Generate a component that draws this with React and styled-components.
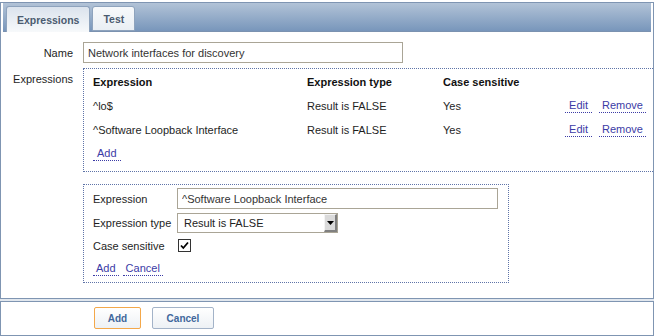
import React from 'react';
import styled, { createGlobalStyle } from 'styled-components';

const Global = createGlobalStyle`
  html, body { margin: 0; padding: 0; background: #fff; }
  body {
    font-family: "Liberation Sans", Arial, Helvetica, sans-serif;
    font-size: 11px;
    color: #1e1e1e;
  }
  * { box-sizing: border-box; }
`;

const Page = styled.div`
  width: 654px;
  height: 336px;
  padding-top: 2px;
  background: #fff;
  overflow: hidden;
`;

const Panel = styled.div`
  border: 1px solid #7f95b2;
  background: #fff;
`;

const TabBar = styled.div`
  margin: 0 2px;
  height: 29px;
  padding: 0 3px;
  display: flex;
  align-items: flex-end;
  gap: 2px;
  background: linear-gradient(#b2c3d7, #7896bb);
  border-bottom: 1px solid #7b92b0;
`;

const Tab = styled.div`
  height: ${(p) => (p.$active ? 26 : 25)}px;
  margin-bottom: ${(p) => (p.$active ? -1 : 0)}px;
  padding: 0 10px;
  display: flex;
  align-items: center;
  border: 1px solid #8ea3bd;
  border-bottom: ${(p) => (p.$active ? 'none' : '1px solid #8ea3bd')};
  border-radius: 3px 3px 0 0;
  background: ${(p) =>
    p.$active
      ? 'linear-gradient(#dbe3ed, #f7f9fb)'
      : 'linear-gradient(#f7f9fb, #eaeff4)'};
  color: #4b5b70;
  font-weight: bold;
  font-size: 10.5px;
`;

const Body = styled.div`
  padding: 10px 0 15px 0;
  display: grid;
  grid-template-columns: 82px 1fr;
  row-gap: 5px;
`;

const Label = styled.div`
  text-align: right;
  padding-right: 10px;
  line-height: 14px;
  color: #1e1e1e;
  align-self: ${(p) => (p.$top ? 'start' : 'center')};
  padding-top: ${(p) => (p.$top ? 4 : 0)}px;
`;

const TextInput = styled.input`
  width: ${(p) => p.$w}px;
  height: ${(p) => p.$h || 21}px;
  border: 1px solid #aaa596;
  padding: 0 4px;
  font-family: inherit;
  font-size: 11px;
  color: #333;
  background: #fff;
  outline: none;
`;

const RightCol = styled.div`
  display: flex;
  flex-direction: column;
  gap: 12px;
`;

const ExprBox = styled.div`
  border: 1px dotted #5f74a8;
  border-right: none;
  padding: 1px 7px 5px 9px;
  display: grid;
  grid-template-columns: 214px 136px 1fr auto;
  grid-auto-rows: 24px;
`;

const Cell = styled.div`
  display: flex;
  align-items: center;
  font-weight: ${(p) => (p.$head ? 'bold' : 'normal')};
  color: ${(p) => (p.$head ? '#111' : '#1e1e1e')};
  justify-content: ${(p) => (p.$end ? 'flex-end' : 'flex-start')};
  gap: 7px;
`;

const Link = styled.a`
  display: inline-block;
  color: #3b3ba6;
  text-decoration: none;
  line-height: 13px;
  padding: 0 ${(p) => (p.$pad != null ? p.$pad : 3)}px;
  border-bottom: 1px dotted #3b3ba6;
  cursor: pointer;
`;

const EditBox = styled.div`
  width: 426px;
  border: 1px dotted #5f74a8;
  padding: 3px 9px;
  display: grid;
  grid-template-columns: 84px auto;
  grid-template-rows: 21px 20px 17px 21px;
  row-gap: 4px;
  align-items: center;
`;

const FormLabel = styled.div`
  color: #1e1e1e;
  line-height: 14px;
`;

const SelectBox = styled.div`
  width: 161px;
  height: 20px;
  border: 1px solid #aaa596;
  background: #fff;
  display: flex;
  align-items: center;
  color: #222;
`;

const SelectText = styled.span`
  padding-left: 6px;
  flex: 1;
`;

const ArrowBtn = styled.span`
  width: 13px;
  height: 18px;
  background: #dadada;
  border-top: 1px solid #f4f4f4;
  border-left: 1px solid #f4f4f4;
  border-right: 2px solid #808080;
  border-bottom: 2px solid #808080;
  display: flex;
  align-items: center;
  justify-content: center;
`;

const Check = styled.span`
  width: 13px;
  height: 13px;
  margin-left: 1px;
  border: 1px solid #333;
  background: #fff;
  display: flex;
  align-items: center;
  justify-content: center;
`;

const LinkRow = styled.div`
  grid-column: 1 / -1;
  display: flex;
  align-items: center;
  gap: 4px;
`;

const Gap = styled.div`
  height: 2px;
  background: #e1e7ee;
`;

const Footer = styled.div`
  height: 35px;
  border: 1px solid #7f95b2;
  background: #fff;
  padding: 5px 0 0 93px;
  display: flex;
  align-items: flex-start;
  gap: 11px;
`;

const Button = styled.button`
  width: ${(p) => p.$w}px;
  height: 22px;
  border: 1px solid ${(p) => (p.$primary ? '#f4a84a' : '#a3b3c8')};
  border-radius: 2px;
  background: linear-gradient(#ffffff, #edf1f5);
  color: #41679c;
  font-family: inherit;
  font-weight: bold;
  font-size: 10px;
  padding: 0;
  cursor: pointer;
`;

const rows = [
  { expr: '^lo$', type: 'Result is FALSE', cs: 'Yes' },
  { expr: '^Software Loopback Interface', type: 'Result is FALSE', cs: 'Yes' },
];

export default function App() {
  return (
    <Page>
      <Global />
      <Panel>
        <TabBar>
          <Tab $active>Expressions</Tab>
          <Tab>Test</Tab>
        </TabBar>
        <Body>
          <Label>Name</Label>
          <div>
            <TextInput $w={320} readOnly value="Network interfaces for discovery" />
          </div>
          <Label $top>Expressions</Label>
          <RightCol>
            <ExprBox>
              <Cell $head>Expression</Cell>
              <Cell $head>Expression type</Cell>
              <Cell $head>Case sensitive</Cell>
              <Cell />
              {rows.map((r, i) => (
                <React.Fragment key={i}>
                  <Cell>{r.expr}</Cell>
                  <Cell>{r.type}</Cell>
                  <Cell>{r.cs}</Cell>
                  <Cell $end>
                    <Link $pad={4}>Edit</Link>
                    <Link $pad={3}>Remove</Link>
                  </Cell>
                </React.Fragment>
              ))}
              <Cell>
                <Link $pad={4}>Add</Link>
              </Cell>
            </ExprBox>
            <EditBox>
              <FormLabel>Expression</FormLabel>
              <TextInput $w={321} readOnly value="^Software Loopback Interface" />
              <FormLabel>Expression type</FormLabel>
              <SelectBox>
                <SelectText>Result is FALSE</SelectText>
                <ArrowBtn>
                  <svg width="7" height="4" viewBox="0 0 7 4">
                    <path d="M0 0 H7 L3.5 4 Z" fill="#000" />
                  </svg>
                </ArrowBtn>
              </SelectBox>
              <FormLabel>Case sensitive</FormLabel>
              <div>
                <Check>
                  <svg width="11" height="11" viewBox="0 0 11 11">
                    <path d="M2 5.5 L4.3 8 L9 2.5" stroke="#000" strokeWidth="1.8" fill="none" />
                  </svg>
                </Check>
              </div>
              <LinkRow>
                <Link $pad={3}>Add</Link>
                <Link $pad={3}>Cancel</Link>
              </LinkRow>
            </EditBox>
          </RightCol>
        </Body>
      </Panel>
      <Gap />
      <Footer>
        <Button $primary $w={47}>Add</Button>
        <Button $w={62}>Cancel</Button>
      </Footer>
    </Page>
  );
}
